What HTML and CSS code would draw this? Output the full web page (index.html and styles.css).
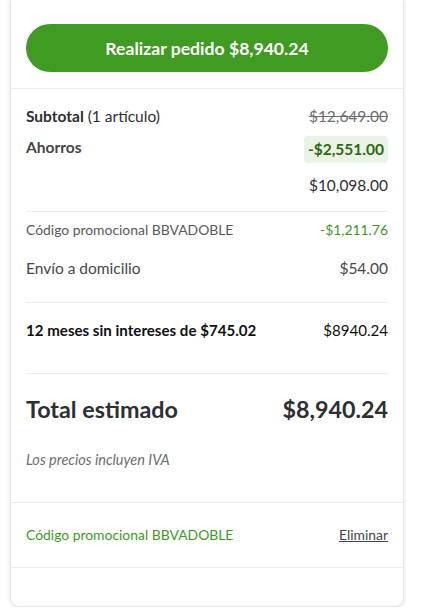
FILE: index.html
```html
<!DOCTYPE html>
<html>
<head>
    <title>Resumen del pedido</title>
    <link rel="stylesheet" href="styles.css">
</head>
<body>
    <div class="card">
        <div class="action">
            <button class="place-order">Realizar pedido $8,940.24</button>
        </div>

        <div class="summary">
            <div class="group items">
                <div class="row">
                    <span><strong>Subtotal</strong> (1 artículo)</span>
                    <span class="old-price">$12,649.00</span>
                </div>
                <div class="row savings">
                    <strong>Ahorros</strong>
                    <span class="badge">-$2,551.00</span>
                </div>
                <div class="row end">
                    <span>$10,098.00</span>
                </div>
            </div>

            <div class="group extras">
                <div class="row small">
                    <span>Código promocional BBVADOBLE</span>
                    <span class="green">-$1,211.76</span>
                </div>
                <div class="row shipping">
                    <span>Envío a domicilio</span>
                    <span>$54.00</span>
                </div>
            </div>

            <div class="group months">
                <div class="row">
                    <strong>12 meses sin intereses de $745.02</strong>
                    <span>$8940.24</span>
                </div>
            </div>

            <div class="group total">
                <div class="row">
                    <strong>Total estimado</strong>
                    <strong>$8,940.24</strong>
                </div>
                <p class="note">Los precios incluyen IVA</p>
            </div>
        </div>

        <div class="promo">
            <span class="green">Código promocional BBVADOBLE</span>
            <a href="#">Eliminar</a>
        </div>
    </div>
</body>
</html>
```

FILE: styles.css
```css
body {
    font-family: Lato, "Noto Sans", sans-serif;
    margin: 0;
    padding: 0 28px 0 10px;
    background: white;
    color: #2e2f32;
}
.card {
    background: white;
    border: 1px solid #e6e6e8;
    border-top: none;
    border-radius: 0 0 9px 9px;
    box-shadow: 0 1px 4px rgba(0,0,0,0.12);
    height: 607px;
    box-sizing: border-box;
}
.action {
    padding: 24px 15px 16px;
    border-bottom: 1px solid #ececee;
}
.place-order {
    display: block;
    width: 100%;
    height: 48px;
    border: none;
    border-radius: 24px;
    background: #3f9b21;
    color: white;
    font-family: inherit;
    font-size: 17.6px;
    font-weight: 700;
    cursor: pointer;
}
.summary {
    padding: 0 15px;
}
.group {
    border-bottom: 1px solid #ececee;
}
.row {
    display: flex;
    justify-content: space-between;
    align-items: flex-start;
    font-size: 15.5px;
    line-height: 20px;
    color: #2e2f32;
}
.items {
    padding: 17px 0 16px;
}
.old-price {
    color: #6d6e71;
    text-decoration: line-through;
}
.savings {
    margin-top: 10px;
    color: #46474a;
}
.savings strong {
    margin-top: 1px;
}
.badge {
    background: #eaf3e4;
    color: #2a6a10;
    font-weight: 700;
    font-size: 15.5px;
    line-height: 19px;
    padding: 4px 4px;
    border-radius: 4px;
}
.end {
    justify-content: flex-end;
    margin-top: 12px;
}
.extras {
    padding: 8px 0 24px;
}
.small {
    font-size: 13.9px;
    color: #595a5d;
}
.green {
    color: #3d9a1e;
}
.shipping {
    margin-top: 18px;
    color: #46474a;
}
.months {
    padding: 17px 0 33px;
}
.months .row {
    font-size: 15.1px;
    color: #111;
}
.total {
    padding: 21px 0 0;
    border-bottom: none;
}
.total .row {
    font-size: 23.3px;
    line-height: 28px;
    color: #2e2f32;
}
.note {
    margin: 28px 0 33px;
    font-size: 14.5px;
    line-height: 18px;
    font-style: italic;
    color: #6d6e71;
}
.promo {
    display: flex;
    justify-content: space-between;
    align-items: center;
    padding: 22px 15px;
    font-size: 13.9px;
    line-height: 20px;
    border-top: 1px solid #ececee;
    border-bottom: 1px solid #ececee;
}
.promo a {
    color: #46474a;
    text-decoration: underline;
}
```
